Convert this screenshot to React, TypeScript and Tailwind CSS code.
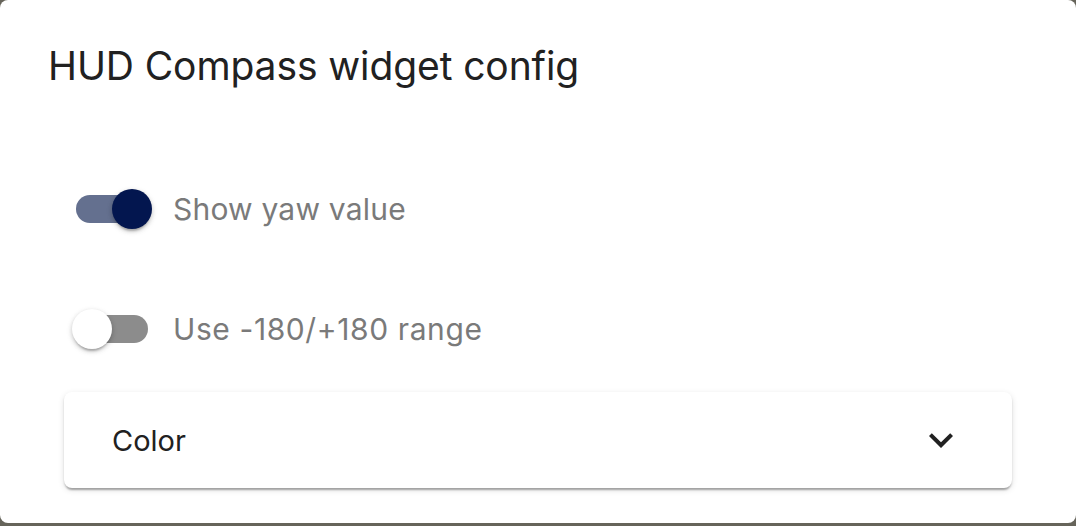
import React from "react";

const Toggle = ({ on }: { on: boolean }) => {
  return (
    <div className="relative w-[80px] h-[40px] shrink-0">
      <div
        className={
          on
            ? "absolute left-[4px] top-[6px] w-[74px] h-[28px] rounded-full bg-[#64708f]"
            : "absolute left-[4px] top-[6px] w-[72px] h-[28px] rounded-full bg-[#8c8c8c]"
        }
      />
      <div
        className={
          on
            ? "absolute left-[40px] top-0 w-[40px] h-[40px] rounded-full bg-[#03164f] shadow-[0_4px_2px_-2px_rgba(0,0,0,0.2),0_2px_4px_0_rgba(0,0,0,0.14),0_2px_6px_0_rgba(0,0,0,0.12)]"
            : "absolute left-0 top-0 w-[40px] h-[40px] rounded-full bg-white shadow-[0_4px_2px_-2px_rgba(0,0,0,0.2),0_2px_4px_0_rgba(0,0,0,0.14),0_2px_6px_0_rgba(0,0,0,0.12)]"
        }
      />
    </div>
  );
};

const App = () => {
  return (
    <div className="w-[1076px] h-[526px] bg-[#66645a] overflow-hidden font-['Inter',sans-serif]">
      <div className="h-[523px] w-full bg-white rounded-[8px] flex flex-col">
        {/* title */}
        <div className="mt-[33px] h-[64px] pl-[48px] flex items-center text-[39px] tracking-[-0.1px] text-[#212121] leading-none">
          HUD Compass widget config
        </div>

        {/* switches */}
        <div className="mt-[92px] pl-[72px] flex items-center h-[40px]">
          <Toggle on={true} />
          <span className="ml-[21px] text-[30px] tracking-[0.2px] text-[#7a7a7a] leading-none">Show yaw value</span>
        </div>
        <div className="mt-[80px] pl-[72px] flex items-center h-[40px]">
          <Toggle on={false} />
          <span className="ml-[21px] text-[30px] tracking-[0.6px] text-[#7a7a7a] leading-none">Use -180/+180 range</span>
        </div>

        {/* accordion */}
        <div className="mt-[43px] ml-[64px] w-[948px] h-[96px] rounded-[8px] bg-white px-[48px] flex items-center justify-between shadow-[0_4px_2px_-2px_rgba(0,0,0,0.2),0_2px_2px_0_rgba(0,0,0,0.14),0_2px_6px_0_rgba(0,0,0,0.12)]">
          <span className="text-[29px] text-[#212121] leading-none">Color</span>
          <svg width="48" height="48" viewBox="0 0 24 24" className="mr-[-1px]">
            <path d="M16.59 8.59 12 13.17 7.41 8.59 6 10l6 6 6-6z" fill="#212121" />
          </svg>
        </div>
      </div>
    </div>
  );
};

export default App;
